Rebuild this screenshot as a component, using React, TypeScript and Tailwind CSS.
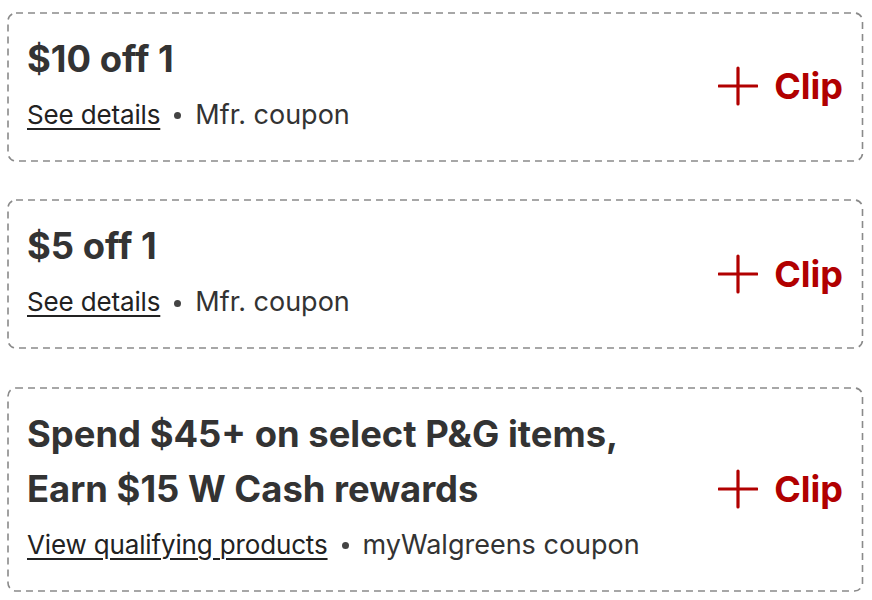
import React from "react";

type Coupon = { title: string[]; link: string; kind: string };

const coupons: Coupon[] = [
  { title: ["$10 off 1"], link: "See details", kind: "Mfr. coupon" },
  { title: ["$5 off 1"], link: "See details", kind: "Mfr. coupon" },
  {
    title: ["Spend $45+ on select P&G items,", "Earn $15 W Cash rewards"],
    link: "View qualifying products",
    kind: "myWalgreens coupon",
  },
];

function PlusIcon() {
  return (
    <svg width="40" height="40" viewBox="0 0 40 40" className="shrink-0">
      <path d="M20 2 V38 M1 20 H39" stroke="#b10000" strokeWidth="3.2" strokeLinecap="round" fill="none" />
    </svg>
  );
}

function DashedFrame() {
  return (
    <svg className="pointer-events-none absolute inset-[0.75px] h-[calc(100%-1.5px)] w-[calc(100%-1.5px)] overflow-visible">
      <rect
        x="0"
        y="0"
        width="100%"
        height="100%"
        rx="8"
        ry="8"
        fill="none"
        stroke="#8a8a8a"
        strokeWidth="1.6"
        strokeDasharray="7 5"
      />
    </svg>
  );
}

function Card({ c }: { c: Coupon }) {
  return (
    <div className="relative flex items-center justify-between pl-[20px] pr-[20px] pt-[19.5px] pb-[27px]">
      <DashedFrame />
      <div className="flex flex-col">
        <div className="text-[36.4px] font-bold leading-[55px] text-[#333333]">
          {c.title.map((t) => (
            <div key={t}>{t}</div>
          ))}
        </div>
        <div className="mt-[8px] flex items-center text-[27px] leading-[40px] text-[#333333]">
          <span className="text-[26px] tracking-[-0.15px] text-[#222222] underline decoration-[1.5px] underline-offset-[4px]">
            {c.link}
          </span>
          <span className="mx-[14px] mt-[2px] inline-block h-[7px] w-[7px] rounded-full bg-[#444444]" />
          <span>{c.kind}</span>
        </div>
      </div>
      <div className="flex items-center gap-[16px] pt-[6px]">
        <PlusIcon />
        <span className="text-[36px] font-bold leading-[44px] text-[#b10000]">Clip</span>
      </div>
    </div>
  );
}

export default function App() {
  return (
    <div
      className="min-h-[600px] w-[872px] bg-white pl-[7px] pr-[9px] pt-[12px]"
      style={{ fontFamily: "Inter, 'Liberation Sans', sans-serif" }}
    >
      <div className="flex flex-col gap-[38px]">
        {coupons.map((c, i) => (
          <Card key={i} c={c} />
        ))}
      </div>
    </div>
  );
}
